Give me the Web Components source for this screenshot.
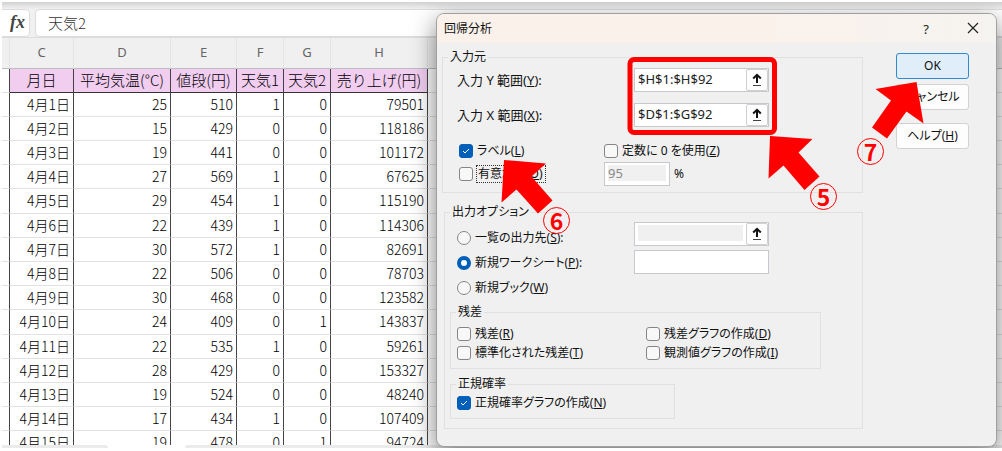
<!DOCTYPE html>
<html lang="ja">
<head>
<meta charset="utf-8">
<title>回帰分析</title>
<style>
  body { margin: 0; background: #fff; font-family: "Noto Sans", "Noto Sans CJK JP", sans-serif; }
</style>
</head>
<body>
<excel-screen></excel-screen>

<script>
const define = (name, html, setup) => {
  const template = document.createElement('template');
  template.innerHTML = html;
  customElements.define(name, class extends HTMLElement {
    constructor() {
      super();
      this.attachShadow({ mode: 'open' }).append(template.content.cloneNode(true));
    }
    connectedCallback() {
      if (setup && !this.ready) { this.ready = true; setup(this, this.shadowRoot); }
    }
  });
};

define('formula-bar', `
  <style>
    :host { display: flex; gap: 5px; padding-top: 7px; background: linear-gradient(#d2d2d2, #f0f0f0 7px); }
    .fx, input { box-sizing: border-box; height: 28px; border: 1px solid #dcdcdc; background: #fff; }
    .fx { width: 28px; padding-left: 4px; border-left: 0; border-radius: 0 5px 5px 0; text-align: center;
          font: italic bold 18px/25px "Liberation Serif", serif; color: #444; }
    input { flex: 1; min-width: 0; padding: 0 12px 2px; border-right: 0; border-radius: 5px 0 0 5px;
            font: 300 15px "Noto Sans CJK JP", sans-serif; color: #333; outline: 0; }
  </style>
  <span class="fx">fx</span><input aria-label="数式バー" value="天気2">`);

define('data-sheet', `
  <style>
    :host { display: block; }
    table { width: 100%; table-layout: fixed; border-collapse: separate; border-spacing: 0;
            font: 300 14px "Noto Sans CJK JP", sans-serif; color: #000; }
    col.edge { width: 8px; } col.c { width: 64px; } col.d { width: 97px; } col.e { width: 66px; }
    col.f { width: 47px; } col.h { width: 97px; }
    th, td { box-sizing: border-box; height: 24px; padding: 0 0 2px; line-height: 20px; white-space: nowrap;
             overflow: hidden; border-bottom: 1px solid #e2e2e2; font-weight: inherit; }
    .letters th { height: 32px; background: #f0f0f0; color: #666; font: 13px "Noto Sans", sans-serif;
                  border-bottom-color: #bdbdbd; border-top: 1px solid #dcdcdc; border-right: 1px solid #e4e4e4; }
    .letters th:last-child { border-right: 0; }
    .names th:not(:first-child):not(:last-child) { background: #f1cdf0; font-size: 15px; border-bottom-color: #333; }
    td { text-align: right; padding-right: 3px; }
    .names th:not(:last-child), td:not(:last-child) { border-right: 1px solid #444; }
    tbody tr:nth-child(5n) td { height: 25px; }
  </style>
  <table>
    <colgroup><col class="edge"><col class="c"><col class="d"><col class="e"><col class="f"><col class="f"><col class="h"><col></colgroup>
    <thead>
      <tr class="letters"><th></th><th>C</th><th>D</th><th>E</th><th>F</th><th>G</th><th>H</th><th></th></tr>
      <tr class="names"><th></th><th>月日</th><th>平均気温(°C)</th><th>値段(円)</th><th>天気1</th><th>天気2</th><th>売り上げ(円)</th><th></th></tr>
    </thead>
    <tbody></tbody>
  </table>`, (host, root) => {
  const rows = [
    [25, 510, 1, 0, 79501], [15, 429, 0, 0, 118186], [19, 441, 0, 0, 101172], [27, 569, 1, 0, 67625],
    [29, 454, 1, 0, 115190], [22, 439, 1, 0, 114306], [30, 572, 1, 0, 82691], [22, 506, 0, 0, 78703],
    [30, 468, 0, 0, 123582], [24, 409, 0, 1, 143837], [22, 535, 1, 0, 59261], [28, 429, 0, 0, 153327],
    [19, 524, 0, 0, 48240], [17, 434, 1, 0, 107409], [19, 478, 0, 1, 94724]
  ];
  root.querySelector('tbody').innerHTML = rows.map((r, i) =>
    '<tr><td></td>' + [`4月${i + 1}日`, ...r].map(v => `<td>${v}</td>`).join('') + '<td></td></tr>').join('');
});

define('sheet-tabs', `
  <style>
    :host { display: flex; gap: 77px; height: 3px; background: #fff; }
    span { background: #ebebeb; border-radius: 0 4px 0 0; width: 106px; }
    span + span { flex: 1; border-radius: 4px 0 0 0; }
  </style><span></span><span></span>`);

define('dialog-window', `
  <style>
    :host { display: block; box-sizing: border-box; border: 1px solid #a0a0a0; border-radius: 8px; background: #f0f0f0;
            box-shadow: 0 8px 24px rgba(0,0,0,.5); color: #111;
            font-size: 12px; line-height: 16px; font-feature-settings: "palt"; }
    header { display: flex; align-items: center; height: 29px; padding: 0 17px 0 7px; border-radius: 7px 7px 0 0;
             background: linear-gradient(90deg, #faf1eb 60%, #f5f3f0); }
    h1 { flex: 1; margin: 0; font: inherit; }
    button { width: 12px; height: 20px; padding: 0; border: 0; background: none; font: 13px/20px "Noto Sans", sans-serif; color: #222; }
    button + button { margin-left: 35px; }
    svg { display: block; }
  </style>
  <header>
    <h1><slot name="title"></slot></h1>
    <button aria-label="ヘルプ">?</button>
    <button aria-label="閉じる"><svg width="12" height="20" viewBox="0 0 12 20" stroke="#222" stroke-width="1.2"><path d="M1 4l10 10M11 4L1 14"/></svg></button>
  </header>
  <slot></slot>`);

define('group-box', `
  <style>
    :host { display: block; }
    fieldset { box-sizing: border-box; height: 100%; min-width: 0; margin: 0; padding: 0; border: 1px solid #e0e0e0; }
    legend { margin-left: 5px; padding: 0 2px; }
  </style>
  <fieldset><legend><slot name="legend"></slot></legend><slot></slot></fieldset>`);

const optionStyle = `
    :host { display: block; }
    label { display: flex; align-items: center; gap: 4px; height: 100%; white-space: nowrap; }
    input { appearance: none; flex: none; box-sizing: border-box; width: 14px; height: 14px; margin: 0;
            border: 1px solid #858585; background: #f8f8f8; }
    :host([focused]) span { outline: 1px dotted #333; padding: 0 2px 0 1px; }`;
define('check-option', `
  <style>${optionStyle}
    input { border-radius: 3px; }
    input:checked { border-color: #005fb8; background: #005fb8 url("data:image/svg+xml,%3Csvg xmlns='http://www.w3.org/2000/svg' viewBox='0 0 12 12'%3E%3Cpath d='M3 6l2 2 4-4' fill='none' stroke='white'/%3E%3C/svg%3E"); }
  </style>
  <label><input type="checkbox"><span><slot></slot></span></label>`,
  (host, root) => { root.querySelector('input').checked = host.hasAttribute('checked'); });

define('radio-option', `
  <style>${optionStyle}
    input { border-radius: 50%; }
    input:checked { border: 4px solid #005fb8; background: #fff; }
  </style>
  <label><input type="radio"><span><slot></slot></span></label>`,
  (host, root) => {
    const input = root.querySelector('input');
    input.checked = host.hasAttribute('checked');
    input.addEventListener('change', () => {
      for (const other of host.parentElement.querySelectorAll('radio-option'))
        if (other !== host) other.shadowRoot.querySelector('input').checked = false;
    });
  });

define('range-field', `
  <style>
    :host { display: flex; align-items: center; justify-content: space-between; }
    label { white-space: nowrap; font-size: 13px; }
    .box { display: flex; box-sizing: border-box; width: var(--field-width, 135px); height: 24px; padding: 2px 0 4px 3px;
           border: 1px solid #c8c8ce; background: #fff; }
    input { flex: 1; min-width: 0; box-sizing: border-box; padding: 0; border: 0; outline: 0; background: #fff;
            font: 13px/17px "Noto Sans", sans-serif; color: #222; }
    input:disabled { background: #f0f0f0; color: #888; margin-right: 3px; }
    button { width: 22px; margin: -2px 0 -4px; padding: 0; border: 1px solid #d0d0d0; border-radius: 2px; background: #fdfdfd; }
    svg { display: block; margin: auto; }
    :host([plain]) button { display: none; }
  </style>
  <label for="field"><slot></slot></label>
  <div class="box"><input id="field"><button aria-label="範囲を選択"><svg width="12" height="14" viewBox="0 0 12 14"><path d="M6 1.5v8.5M2.2 5.4L6 1.8l3.800 3.600" fill="none" stroke="#111" stroke-width="2"/><path d="M2 12.500h8" stroke="#444"/></svg></button></div>`,
  (host, root) => {
    const input = root.querySelector('input');
    input.value = host.getAttribute('value') || '';
    input.disabled = host.hasAttribute('disabled');
    if (host.hasAttribute('name')) input.setAttribute('aria-label', host.getAttribute('name'));
  });

define('push-button', `
  <style>
    :host { display: block; }
    button { display: block; box-sizing: border-box; width: 100%; height: 26px; padding: 0; border: 1px solid #d2d2d2;
             border-radius: 3px; background: #fdfdfd; font: inherit; font-feature-settings: inherit; color: #111; white-space: nowrap; }
    :host([primary]) button { border-color: #2f8ad0; background: #e0eef9; }
  </style>
  <button><slot></slot></button>`);

define('step-notes', `
  <style>
    :host { display: block; pointer-events: none; color: #f00; }
    svg { display: block; fill: #f00; overflow: visible; }
    span { position: absolute; box-sizing: border-box; width: 27px; height: 27px; border: 1px solid #f00; border-radius: 50%;
           text-align: center; font: bold 23px/24px "Noto Sans CJK JP", sans-serif; }
    .five { left: 810px; top: 183px; } .six { left: 543px; top: 207px; } .seven { left: 857px; top: 138px; }
  </style>
  <svg width="1" height="1">
    <rect x="630" y="59.500" width="144.500" height="73" rx="4" fill="none" stroke="#f00" stroke-width="5"/>
    <path d="M770 136L812.5 139 798.5 152.5 819.5 176.5 804.5 190 783.5 165.5 768.5 178.5z"/>
    <path d="M504 160L546 163.5 531.5 176.5 552.5 200.5 538 213.5 516.5 189.5 501.5 202.5z"/>
    <path d="M916.5 82L923.5 123.5 906.5 111.5 887 138.5 872 127.5 891 100.5 875.5 89z"/>
  </svg>
  <span class="five">5</span><span class="six">6</span><span class="seven">7</span>`);

define('regression-form', `
  <style>
    :host { display: flex; gap: 33px; padding: 6px 27px 17px 5px; }
    .groups { flex: 1; min-width: 0; display: flex; flex-direction: column; gap: 11px; }
    .ranges { display: grid; gap: 11px; padding: 3px 93px 0 14px; }
    .checks { display: grid; grid-template-columns: 145px 1fr; row-gap: 3px; padding: 16px 0 6px 16px; }
    .level { display: flex; align-items: center; gap: 4px; height: 24px; }
    .level range-field { --field-width: 66px; }
    .output { margin-left: 2px; }
    .target { display: flex; justify-content: space-between; padding: 2px 93px 4px 12px; }
    .radios { display: grid; grid-auto-rows: 25px; padding-top: 3px; }
    .boxes { display: grid; align-content: start; gap: 4px; }
    .residual { margin: 0 41px 7px 5px; }
    .residual div { display: grid; grid-template-columns: 189px 1fr; grid-auto-rows: 19px; padding: 4px 0 6px 6px; }
    .normal { width: 225px; margin: 0 0 9px 5px; }
    .normal div { display: grid; grid-auto-rows: 19px; padding: 1px 0 6px 6px; }
    .buttons { width: 73px; padding-top: 4px; display: flex; flex-direction: column; gap: 5px; }
    .buttons push-button:last-child { margin-top: 8px; }
  </style>
  <div class="groups">
    <group-box><span slot="legend">入力元</span>
      <div class="ranges">
        <range-field value="$H$1:$H$92">入力 Y 範囲(<u>Y</u>):</range-field>
        <range-field value="$D$1:$G$92">入力 X 範囲(<u>X</u>):</range-field>
      </div>
      <div class="checks">
        <check-option checked>ラベル(<u>L</u>)</check-option>
        <check-option>定数に 0 を使用(<u>Z</u>)</check-option>
        <check-option focused>有意水準(<u>O</u>)</check-option>
        <div class="level"><range-field plain disabled value="95" name="有意水準"></range-field>%</div>
      </div>
    </group-box>
    <group-box class="output"><span slot="legend">出力オプション</span>
      <div class="target">
        <div class="radios">
          <radio-option>一覧の出力先(<u>S</u>):</radio-option>
          <radio-option checked>新規ワークシート(<u>P</u>):</radio-option>
          <radio-option>新規ブック(<u>W</u>)</radio-option>
        </div>
        <div class="boxes">
          <range-field disabled name="一覧の出力先"></range-field>
          <range-field plain name="新規ワークシート"></range-field>
        </div>
      </div>
      <group-box class="residual"><span slot="legend">残差</span>
        <div>
          <check-option>残差(<u>R</u>)</check-option>
          <check-option>残差グラフの作成(<u>D</u>)</check-option>
          <check-option>標準化された残差(<u>T</u>)</check-option>
          <check-option>観測値グラフの作成(<u>I</u>)</check-option>
        </div>
      </group-box>
      <group-box class="normal"><span slot="legend">正規確率</span>
        <div><check-option checked>正規確率グラフの作成(<u>N</u>)</check-option></div>
      </group-box>
    </group-box>
  </div>
  <div class="buttons">
    <push-button primary>OK</push-button>
    <push-button>キャンセル</push-button>
    <push-button>ヘルプ(<u>H</u>)</push-button>
  </div>`);

define('excel-screen', `
  <style>
    :host { display: block; position: relative; box-sizing: border-box; height: 100vh; padding: 2px 0 3px 2px; }
    main { display: flex; flex-direction: column; height: 100%; overflow: hidden; position: relative; }
    data-sheet { flex: 1; min-height: 0; overflow: hidden; }
    dialog-window { position: absolute; left: 434px; top: 11px; width: 561px; }
    step-notes { position: absolute; left: 0; top: 0; }
  </style>
  <main>
    <formula-bar></formula-bar>
    <data-sheet></data-sheet>
    <sheet-tabs></sheet-tabs>
    <dialog-window><span slot="title">回帰分析</span><regression-form></regression-form></dialog-window>
  </main>
  <step-notes></step-notes>`);
</script>
</body>
</html>
